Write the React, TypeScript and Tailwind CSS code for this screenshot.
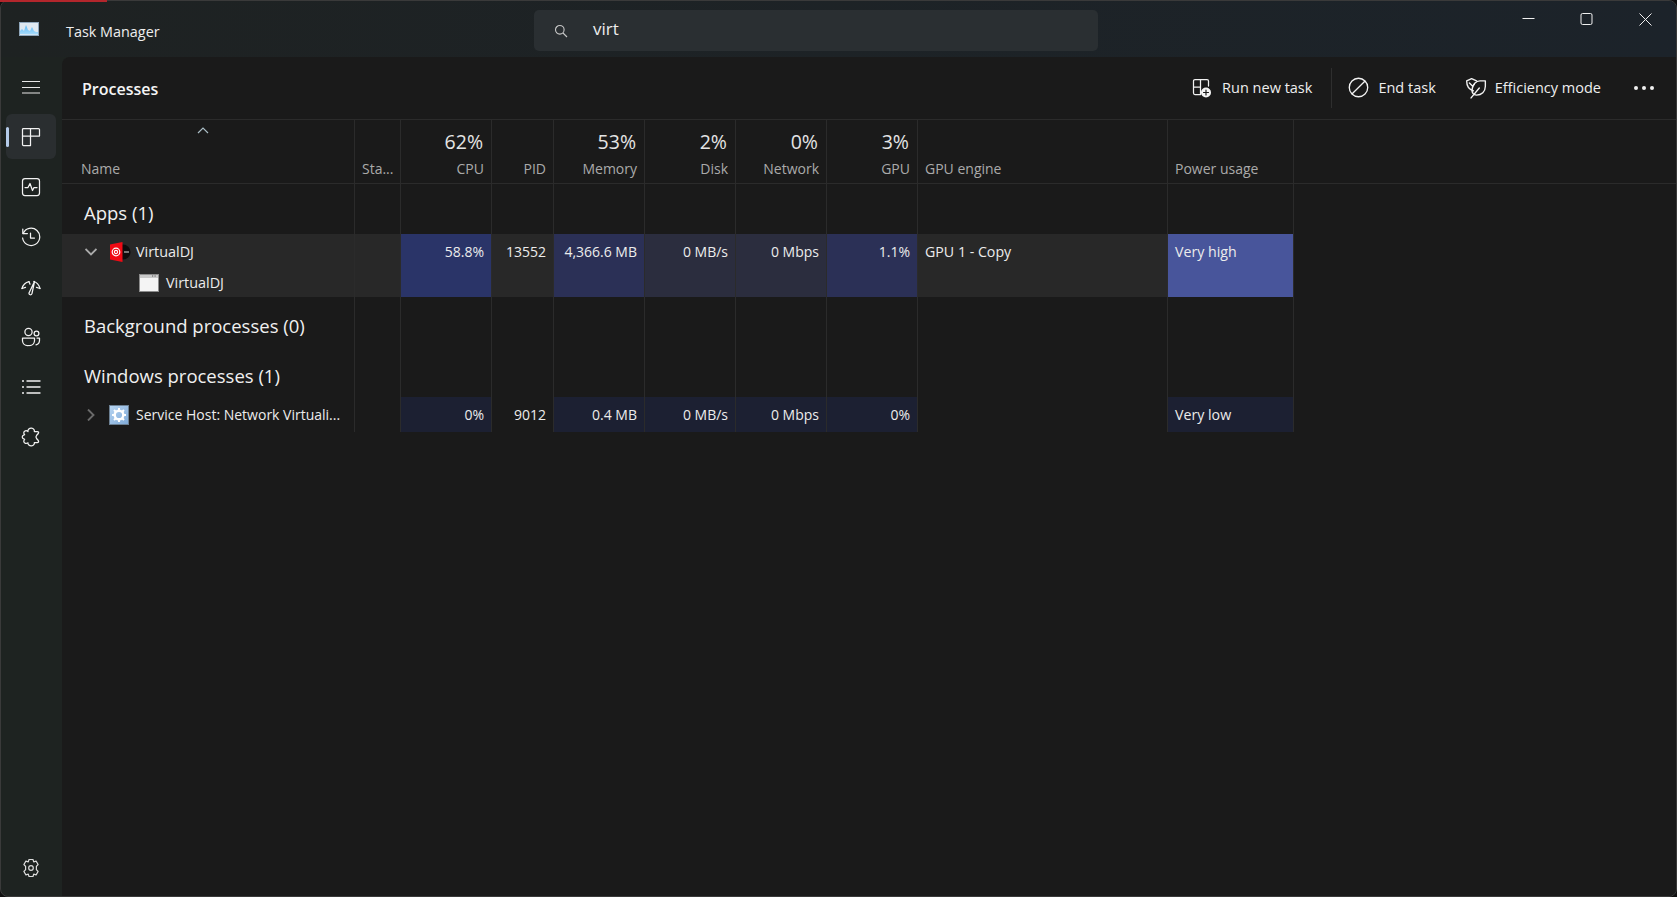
import type { ReactNode } from 'react';

const cols = 'grid grid-cols-[293px_46px_91px_62px_91px_91px_91px_91px_250px_126px_1fr]';
const line = 'border-r border-[#2b2b2b]';

const Stroke = ({ size = 20, children }: { size?: number; children: ReactNode }) => (
  <svg width={size} height={size} viewBox="0 0 20 20" fill="none" stroke="#f2f2f2" strokeWidth="1.25" strokeLinecap="round" strokeLinejoin="round">
    {children}
  </svg>
);

const sideIcons = [
  <Stroke key="perf">
    <rect x="1.5" y="1.5" width="17" height="17" rx="2.5" />
    <path d="M4 10.5h3l2-4 2.5 7 1.5-3h3" />
  </Stroke>,
  <Stroke key="history">
    <path d="M2.2 6.5A8.6 8.6 0 1 1 1.6 11" />
    <path d="M1.8 2v4.6h4.6" />
    <path d="M9.5 6v5h4" />
  </Stroke>,
  <Stroke key="startup">
    <path d="M1 11.500C2 8 4.500 5.500 8 4.700M12.800 4.500C15.500 5.200 18 8 19 11.500" />
    <path d="M1 11.500l3.500-1.200M19 11.500l-3.500-1.200M8 4.700l1 2.500" />
    <path d="M13.500 4.500L11 16.500a1.500 1.500 0 0 1-3-.5z" />
  </Stroke>,
  <Stroke key="users">
    <circle cx="7.500" cy="5" r="3.600" />
    <circle cx="15.500" cy="6.500" r="2.400" />
    <path d="M1.500 11h12v3a5 5 0 0 1-5 4.500h-2a5 5 0 0 1-5-4.500z" />
    <path d="M16 11h2.500v2.500a4.500 4.500 0 0 1-3.500 4.300" />
  </Stroke>,
  <Stroke key="list">
    <path d="M6 4h13M6 10h13M6 16h13" strokeWidth="1.4" />
    <circle cx="2" cy="4" r="1" fill="#f2f2f2" stroke="none" />
    <circle cx="2" cy="10" r="1" fill="#f2f2f2" stroke="none" />
    <circle cx="2" cy="16" r="1" fill="#f2f2f2" stroke="none" />
  </Stroke>,
  <Stroke key="services">
    <path d="M7 4.500C6.500 2.500 8.500 1 10.500 1.200C12.500 1.400 13.800 3 13.300 4.500H16.300C17.500 4.500 18 5.500 17.300 6.500L15.700 8.200C14.900 9.200 14.900 10.800 15.700 11.800L17.300 13.500C18 14.500 17.500 15.500 16.300 15.500H13.300C13.800 17 12.500 18.600 10.500 18.800C8.500 19 6.500 17.500 7 15.800C5.500 17 3 16.500 2.800 14.500C2.700 13.500 3 12.900 3.600 12.400C2.300 11.900 1.200 11.200 1.200 10C1.200 8.800 2.300 8.100 3.600 7.600C3 7.100 2.700 6.500 2.800 5.500C3 3.500 5.500 3.300 7 4.500Z" />
  </Stroke>,
];

const HeaderCell = ({ pct, label, left, title }: { pct?: string; label: string; left?: boolean; title?: boolean }) => (
  <div className={`flex flex-col justify-end pb-[4px] ${left ? 'items-start pl-[7px]' : 'items-end pr-[7px]'} ${title ? '' : line} h-[63px]`}>
    {pct && <div className="text-[19.5px] leading-6 mb-[5px] mr-[1px] text-[#e4e4e4]">{pct}</div>}
    <div className="text-[14px] leading-5 text-[#aaaaaa]">{label}</div>
  </div>
);

const Section = ({ name }: { name: string }) => (
  <div className={`${cols} h-[50px]`}>
    <div className={`${line} pl-[22px] pt-[17px] text-[18.5px] leading-6 text-[#f0f0f0] whitespace-nowrap`}>{name}</div>
    {Array.from({ length: 9 }).map((_, i) => (
      <div key={i} className={line} />
    ))}
  </div>
);

const Value = ({ bg, children, left }: { bg: string; children?: ReactNode; left?: boolean }) => (
  <div className={`${bg} ${line} pt-[8px] leading-5 text-[#ececec] whitespace-nowrap ${left ? 'pl-[7px] text-[14.2px]' : 'text-right pr-[7px] text-[14px]'}`}>
    {children}
  </div>
);

const Chevron = ({ open }: { open?: boolean }) => (
  <svg width="12" height="12" viewBox="0 0 12 12" fill="none" stroke={open ? '#a8a8a8' : '#6a6a6a'} strokeWidth="1.9">
    {open ? <path d="M0.500 3l5.500 5.500L11.500 3" /> : <path d="M3 0.500L8.500 6 3 11.500" />}
  </svg>
);

export default function App() {
  return (
    <div className="w-[1677px] h-[897px] relative overflow-hidden bg-[#101010] font-['Open_Sans','Noto_Sans',sans-serif]">
      <div className="absolute left-0 top-0 w-[107px] h-[2px] bg-[#b3262c] z-10" />
      <div className="h-full flex flex-col rounded-lg overflow-hidden border border-[#3a3a3a] bg-[#1e2321]">
        {/* title bar */}
        <div className="h-[56px] flex shrink-0 bg-linear-to-r from-[#1e2222] to-[#1c232a]">
          <div className="w-[533px] flex items-start pl-[18px] pt-[21px]">
            <svg width="20" height="14" viewBox="0 0 20 14">
              <defs>
                <linearGradient id="tm" x1="0" y1="0" x2="0" y2="1">
                  <stop offset="0" stopColor="#5cb8f5" />
                  <stop offset="1" stopColor="#a9dcfb" />
                </linearGradient>
              </defs>
              <rect width="20" height="14" fill="#dfe8f0" />
              <path d="M1 12V9l2-2 2 2 2-6 2 5 2 1 2-4 2 4 2 1 2 0v2.500z" fill="url(#tm)" />
              <rect x="0.500" y="0.500" width="19" height="13" fill="none" stroke="#8fa6bb" />
            </svg>
            <span className="ml-[27px] text-[14.4px] leading-5 text-[#eeeeee]">Task Manager</span>
          </div>
          <div className="w-[564px] h-[41px] mt-[9px] rounded-[5px] bg-[#2a2f32] flex items-center pl-[19px]">
            <svg width="16" height="16" viewBox="0 0 16 16" fill="none" stroke="#c8c8c8" strokeWidth="1.100">
              <circle cx="6.800" cy="6.800" r="4.300" />
              <path d="M10 10l4 4" />
            </svg>
            <span className="ml-[24px] text-[17px] text-[#ededed] -mt-[4px]">virt</span>
          </div>
          <div className="flex-1 flex justify-end items-start pt-[12px] pr-[24px]">
            <svg width="13" height="13" viewBox="0 0 13 13" stroke="#f0f0f0" className="mr-[45px]">
              <path d="M0.500 5.500h12" />
            </svg>
            <svg width="13" height="13" viewBox="0 0 13 13" fill="none" stroke="#f0f0f0" className="mr-[46px]">
              <rect x="1" y="0.500" width="11" height="11" rx="1.500" />
            </svg>
            <svg width="13" height="13" viewBox="0 0 13 13" stroke="#f0f0f0">
              <path d="M0.500 0.500l12 12M12.500 0.500l-12 12" />
            </svg>
          </div>
        </div>

        <div className="flex-1 flex min-h-0">
          {/* sidebar */}
          <div className="w-[61px] shrink-0 flex flex-col items-center pr-[1px] relative">
            <svg width="18" height="14" viewBox="0 0 18 14" stroke="#e8e8e8" className="mt-[23px]">
              <path d="M0 1.500h18M0 7.500h18M0 13h18" />
            </svg>
            <div className="mt-[20px] w-[50px] h-[45px] rounded-md bg-[#2a2e30] relative flex items-center justify-center">
              <div className="absolute left-0 top-[13px] w-[3px] h-[20px] rounded-full bg-[#b5cbe9]" />
              <Stroke size={20}>
                <path d="M2.500 1.500h15a1 1 0 0 1 1 1V9H1.500V2.500a1 1 0 0 1 1-1zM1.500 9H9.500v9.500h-7a1 1 0 0 1-1-1zM9.500 1.500V9" />
              </Stroke>
            </div>
            <div className="flex flex-col gap-[30px] mt-[18px]">{sideIcons}</div>
            <div className="mt-auto mb-[18px]">
              <svg width="20" height="20" viewBox="0 0 20 20" fill="none" stroke="#dcdcdc" strokeWidth="1.200" strokeLinejoin="round">
                <path d="M8 1.500h4l.7 2.300 2.400-.7 2 3.400-1.700 1.800v3.400l1.700 1.800-2 3.400-2.400-.7-.7 2.300H8l-.7-2.300-2.400.7-2-3.400 1.700-1.800V8.300L2.900 6.500l2-3.400 2.400.7z" />
                <circle cx="10" cy="10" r="2.300" />
              </svg>
            </div>
          </div>

          {/* main panel */}
          <div className="flex-1 min-w-0 bg-[#1a1a1a] rounded-tl-lg flex flex-col">
            <div className="h-[63px] shrink-0 flex items-center justify-between border-b border-[#2b2b2b] pl-[20px]">
              <div className="text-[16px] font-semibold text-[#f5f5f5] mt-[2px]">Processes</div>
              <div className="flex items-center text-[14.5px] text-[#eeeeee] mt-[-1px] pr-[22px]">
                <Stroke>
                  <path d="M3 1.500h5.500V9H1.500V3A1.500 1.500 0 0 1 3 1.500zM8.500 1.500H15A1.500 1.500 0 0 1 16.500 3v5M1.500 9v6A1.500 1.500 0 0 0 3 16.500h5.500V9" />
                  <circle cx="14" cy="14.500" r="5" fill="#f5f5f5" stroke="none" />
                  <path d="M14 12v5M11.500 14.500h5" stroke="#1a1a1a" strokeWidth="1.200" />
                </Stroke>
                <span className="ml-[10px]">Run new task</span>
                <div className="w-px h-[40px] bg-[#2e2e2e] ml-[19px] mr-[16px]" />
                <Stroke size={21}>
                  <circle cx="10" cy="10" r="8.800" />
                  <path d="M16 4L4 16" />
                </Stroke>
                <span className="ml-[9px]">End task</span>
                <span className="ml-[29px]" />
                <Stroke size={22}>
                  <path d="M7.500 12.500C4 11.500 1.500 9 1.500 3.500L6 1.500l4.500 2" />
                  <path d="M18.500 3.500v5c0 5-3.500 8-8 8-3 0-4.500-2.500-4-5.500.5-4 3.500-7.500 7-7.500z" />
                  <path d="M5.500 19l7.500-9M4 5.500l3 3 1.500-2" />
                </Stroke>
                <span className="ml-[8px]">Efficiency mode</span>
                <svg width="20" height="4" viewBox="0 0 20 4" fill="#f0f0f0" className="ml-[33px]">
                  <circle cx="2" cy="2" r="2" />
                  <circle cx="10" cy="2" r="2" />
                  <circle cx="18" cy="2" r="2" />
                </svg>
              </div>
            </div>

            {/* header */}
            <div className={`${cols} h-[64px] border-b border-[#2b2b2b] shrink-0`}>
              <div className={`${line} flex flex-col pl-[19px] h-[63px]`}>
                <svg width="12" height="7" viewBox="0 0 12 7" fill="none" stroke="#a9bcc4" strokeWidth="1.200" className="ml-[116px] mt-[7px]">
                  <path d="M1 6l5-5 5 5" />
                </svg>
                <div className="mt-auto pb-[4px] text-[14px] leading-5 text-[#aaaaaa]">Name</div>
              </div>
              <div className={`${line} flex items-end pl-[7px] pb-[4px] text-[14px] leading-5 text-[#aaaaaa] h-[63px]`}>Sta...</div>
              <HeaderCell pct="62%" label="CPU" />
              <HeaderCell label="PID" />
              <HeaderCell pct="53%" label="Memory" />
              <HeaderCell pct="2%" label="Disk" />
              <HeaderCell pct="0%" label="Network" />
              <HeaderCell pct="3%" label="GPU" />
              <HeaderCell label="GPU engine" left />
              <HeaderCell label="Power usage" left />
            </div>

            <Section name="Apps (1)" />

            {/* VirtualDJ row */}
            <div className={`${cols} h-[63px]`}>
              <div className={`${line} bg-[#282828] text-[14.4px] leading-5 text-[#ececec]`}>
                <div className="h-[35px] flex items-center pl-[23px]">
                  <Chevron open />
                  <svg width="22" height="22" viewBox="0 0 22 22" className="ml-[12px] mr-[5px]">
                    <circle cx="14" cy="11" r="7.500" fill="#0d0d0d" />
                    <path d="M15 10.300h5v1.400h-5z" fill="#9a9a9a" />
                    <path d="M1 3.500L13.500 1v20L1 18.500z" fill="#f00a14" />
                    <circle cx="7" cy="11" r="3.800" fill="none" stroke="#ffffff" strokeWidth="1.200" />
                    <circle cx="7" cy="11" r="1.600" fill="none" stroke="#ffffff" strokeWidth="1.100" />
                  </svg>
                  <span>VirtualDJ</span>
                </div>
                <div className="h-[28px] flex items-center pl-[77px]">
                  <svg width="20" height="18" viewBox="0 0 20 18" className="mr-[7px]">
                    <rect width="20" height="18" fill="#8c8c8c" />
                    <rect x="1" y="4" width="18" height="13" fill="#f4f4f4" />
                    <rect x="1" y="1" width="18" height="3" fill="#c9c9c9" />
                    <path d="M13 2h1.200M15.500 2h1.200" stroke="#555555" />
                  </svg>
                  <span>VirtualDJ</span>
                </div>
              </div>
              <Value bg="bg-[#282828]" />
              <Value bg="bg-[#2a3468]">58.8%</Value>
              <Value bg="bg-[#282828]">13552</Value>
              <Value bg="bg-[#2b3056]">4,366.6 MB</Value>
              <Value bg="bg-[#2b2d3e]">0 MB/s</Value>
              <Value bg="bg-[#2b2d3e]">0 Mbps</Value>
              <Value bg="bg-[#2b3056]">1.1%</Value>
              <Value bg="bg-[#282828]" left>GPU 1 - Copy</Value>
              <Value bg="bg-[#48559b]" left>Very high</Value>
            </div>

            <Section name="Background processes (0)" />
            <Section name="Windows processes (1)" />

            {/* service row */}
            <div className={`${cols} h-[35px]`}>
              <div className={`${line} flex items-center pl-[23px] text-[14px] leading-5 text-[#ececec] whitespace-nowrap`}>
                <Chevron />
                <svg width="20" height="20" viewBox="0 0 20 20" className="ml-[12px] mr-[7px]">
                  <defs>
                    <linearGradient id="svc" x1="0" y1="0" x2="1" y2="1">
                      <stop offset="0" stopColor="#b9d6f2" />
                      <stop offset="1" stopColor="#7ea9d8" />
                    </linearGradient>
                  </defs>
                  <rect x="0.500" y="0.500" width="19" height="19" fill="url(#svc)" stroke="#6b7f92" />
                  <circle cx="10" cy="10" r="4.300" fill="none" stroke="#ffffff" strokeWidth="2.400" />
                  <path d="M10 3v2.500M10 14.500V17M3 10h2.500M14.500 10H17M5 5l1.800 1.800M13.200 13.200L15 15M15 5l-1.800 1.800M6.800 13.200L5 15" stroke="#ffffff" strokeWidth="2" />
                </svg>
                <span>Service Host: Network Virtuali...</span>
              </div>
              <Value bg="" />
              <Value bg="bg-[#1c2032]">0%</Value>
              <Value bg="">9012</Value>
              <Value bg="bg-[#1c2032]">0.4 MB</Value>
              <Value bg="bg-[#1c2032]">0 MB/s</Value>
              <Value bg="bg-[#1c2032]">0 Mbps</Value>
              <Value bg="bg-[#1c2032]">0%</Value>
              <Value bg="" left />
              <Value bg="bg-[#1c2032]" left>Very low</Value>
            </div>
          </div>
        </div>
      </div>
    </div>
  );
}
